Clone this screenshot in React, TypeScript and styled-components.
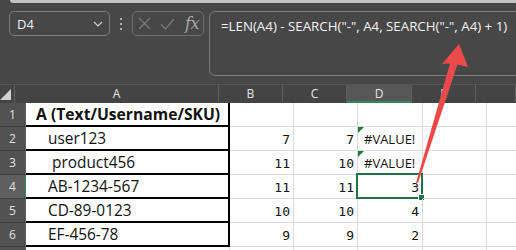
import React from 'react';
import styled, { createGlobalStyle } from 'styled-components';

const Global = createGlobalStyle`
  html, body { margin: 0; padding: 0; background: #ffffff; }
  body { width: 516px; height: 250px; overflow: hidden; font-family: "Open Sans", "Noto Sans", sans-serif; }
`;

const Page = styled.div`
  position: relative;
  width: 516px;
  height: 250px;
  overflow: hidden;
  background: #474747;
  display: flex;
  flex-direction: column;
`;

const TopStrip = styled.div`
  flex: none;
  height: 3px;
  margin-left: 10px;
  background: #c2c2c2;
  border-bottom-left-radius: 4px;
`;

const FormulaBar = styled.div`
  flex: none;
  height: 81px;
  box-sizing: border-box;
  padding: 8px 0 0 9px;
  display: flex;
  align-items: flex-start;
`;

const NameBox = styled.div`
  box-sizing: border-box;
  width: 101px;
  height: 25px;
  border: 1px solid #7c7c7c;
  border-radius: 5px;
  padding: 0 6px 0 7px;
  display: flex;
  align-items: center;
  justify-content: space-between;
  color: #f2f2f2;
  font-size: 13px;
`;

const Dots = styled.div`
  width: 22px;
  height: 25px;
  display: flex;
  flex-direction: column;
  align-items: center;
  justify-content: center;
  gap: 3px;
`;

const Dot = styled.span`
  width: 2px;
  height: 2px;
  border-radius: 1px;
  background: #cfcfcf;
`;

const ButtonBox = styled.div`
  box-sizing: border-box;
  width: 72px;
  height: 25px;
  border: 1px solid #6e6e6e;
  border-radius: 5px;
  display: flex;
  align-items: center;
  padding: 0 3px 0 5px;
  gap: 9px;
  margin-right: 5px;
`;

const Fx = styled.span`
  font-family: "DejaVu Serif", "Liberation Serif", serif;
  font-style: italic;
  font-size: 16px;
  color: #a9a9a9;
  letter-spacing: -0.5px;
  margin-left: 1px;
  line-height: 1;
`;

const FormulaBox = styled.div`
  box-sizing: border-box;
  flex: 1;
  height: 65px;
  margin-right: -20px;
  border: 1px solid #7c7c7c;
  border-radius: 6px;
  padding: 5px 0 0 11px;
  color: #f4f4f4;
  font-size: 13.3px;
  white-space: nowrap;
`;

const Sheet = styled.div`
  flex: 1;
  display: flex;
  flex-direction: column;
  background: #ffffff;
`;

const Row = styled.div<{ $h: number }>`
  display: flex;
  height: ${(p) => p.$h}px;
  flex: none;
`;

const Corner = styled.div`
  position: relative;
  box-sizing: border-box;
  width: 26px;
  background: #444444;
  border-right: 1px solid #5f5f5f;
  border-top: 1px solid #555;
  &::after {
    content: '';
    position: absolute;
    right: 3px;
    bottom: 3px;
    width: 0;
    height: 0;
    border-left: 11px solid transparent;
    border-bottom: 11px solid #d0d0d0;
  }
`;

const ColHead = styled.div<{ $w: number; $active?: boolean }>`
  box-sizing: border-box;
  width: ${(p) => p.$w}px;
  flex: none;
  display: flex;
  align-items: center;
  justify-content: center;
  background: ${(p) => (p.$active ? '#575757' : '#444444')};
  border-top: 1px solid #555;
  border-right: 1px solid #5f5f5f;
  border-bottom: 2px solid ${(p) => (p.$active ? '#2e8b57' : '#444444')};
  color: #e6e6e6;
  font-size: 12px;
  padding-top: 1px;
`;

const RowHead = styled.div<{ $active?: boolean }>`
  box-sizing: border-box;
  width: 26px;
  flex: none;
  display: flex;
  align-items: center;
  justify-content: center;
  background: ${(p) => (p.$active ? '#5f5f5f' : '#525252')};
  border-bottom: 1px solid #3f3f3f;
  border-right: 1px solid ${(p) => (p.$active ? '#2e8b57' : '#5f5f5f')};
  color: #e2e2e2;
  font-size: 12px;
`;

const Cell = styled.div<{ $w: number; $align?: 'left' | 'right'; $mono?: boolean }>`
  position: relative;
  box-sizing: border-box;
  width: ${(p) => p.$w}px;
  flex: none;
  display: flex;
  align-items: center;
  justify-content: ${(p) => (p.$align === 'right' ? 'flex-end' : 'flex-start')};
  padding: ${(p) => (p.$align === 'right' ? '2px 3px 0 0' : '0 0 0 6px')};
  border-right: 1px solid #dadada;
  border-bottom: 1px solid #dadada;
  color: #111;
  font-family: ${(p) => (p.$mono ? '"DejaVu Sans Mono", "Liberation Mono", monospace' : '"Open Sans", sans-serif')};
  font-size: 13px;
`;

const TextCell = styled.div<{ $bold?: boolean }>`
  box-sizing: border-box;
  width: 204px;
  flex: none;
  display: flex;
  align-items: center;
  padding-left: ${(p) => (p.$bold ? '10px' : '22px')};
  border-right: 2px solid #000;
  border-bottom: 2px solid #000;
  background: #fff;
  color: #111;
  font-size: ${(p) => (p.$bold ? '15.7px' : '15.4px')};
  font-weight: ${(p) => (p.$bold ? 700 : 400)};
  white-space: pre;
`;

const ErrorFlag = styled.span`
  position: absolute;
  left: 0;
  top: 0;
  width: 0;
  height: 0;
  border-top: 6px solid #1f7a3a;
  border-right: 6px solid transparent;
`;

const Selection = styled.span`
  position: absolute;
  left: -2px;
  top: -2px;
  right: -1px;
  bottom: -1px;
  border: 2px solid #217346;
  pointer-events: none;
  &::after {
    content: '';
    position: absolute;
    right: -4px;
    bottom: -4px;
    width: 5px;
    height: 5px;
    background: #217346;
    border: 1px solid #fff;
  }
`;

const Overlay = styled.svg`
  position: absolute;
  left: 0;
  top: 0;
  pointer-events: none;
`;

type RowData = {
  n: number;
  a: string;
  b?: string;
  c?: string;
  d?: string;
  err?: boolean;
  sel?: boolean;
  bold?: boolean;
};

const rows: RowData[] = [
  { n: 1, a: 'A (Text/Username/SKU)', bold: true },
  { n: 2, a: 'user123', b: '7', c: '7', d: '#VALUE!', err: true },
  { n: 3, a: ' product456', b: '11', c: '10', d: '#VALUE!', err: true },
  { n: 4, a: 'AB-1234-567', b: '11', c: '11', d: '3', sel: true },
  { n: 5, a: 'CD-89-0123', b: '10', c: '10', d: '4' },
  { n: 6, a: 'EF-456-78', b: '9', c: '9', d: '2' },
];

const cols = [
  { k: 'A', w: 204 },
  { k: 'B', w: 64 },
  { k: 'C', w: 64 },
  { k: 'D', w: 65 },
  { k: 'E', w: 64 },
  { k: '', w: 40 },
];

export default function App() {
  return (
    <Page>
      <Global />
      <TopStrip />
      <FormulaBar>
        <NameBox>
          <span>D4</span>
          <svg width="10" height="6" viewBox="0 0 10 6">
            <path d="M1 1 L5 5 L9 1" fill="none" stroke="#cfcfcf" strokeWidth="1.2" />
          </svg>
        </NameBox>
        <Dots>
          <Dot />
          <Dot />
          <Dot />
        </Dots>
        <ButtonBox>
          <svg width="13" height="13" viewBox="0 0 13 13">
            <path d="M1 1 L12 12 M12 1 L1 12" stroke="#7a7a7a" strokeWidth="1.2" />
          </svg>
          <svg width="15" height="12" viewBox="0 0 15 12">
            <path d="M1 6.5 L5.5 11 L14 1" fill="none" stroke="#7a7a7a" strokeWidth="1.2" />
          </svg>
          <Fx>fx</Fx>
        </ButtonBox>
        <FormulaBox>=LEN(A4) - SEARCH("-", A4, SEARCH("-", A4) + 1)</FormulaBox>
      </FormulaBar>
      <Sheet>
        <Row $h={19}>
          <Corner />
          {cols.map((c) => (
            <ColHead key={c.k || 'F'} $w={c.w} $active={c.k === 'D'}>
              {c.k}
            </ColHead>
          ))}
        </Row>
        {rows.map((r) => (
          <Row $h={24} key={r.n}>
            <RowHead $active={r.sel}>{r.n}</RowHead>
            <TextCell $bold={r.bold}>{r.a}</TextCell>
            <Cell $w={64} $align="right" $mono>{r.b}</Cell>
            <Cell $w={64} $align="right" $mono>{r.c}</Cell>
            {r.err ? (
              <Cell $w={65}>
                <ErrorFlag />
                {r.d}
              </Cell>
            ) : (
              <Cell $w={65} $align="right" $mono>
                {r.d}
                {r.sel && <Selection />}
              </Cell>
            )}
            <Cell $w={64} />
            <Cell $w={40} />
          </Row>
        ))}
        <Row $h={24}>
          <RowHead />
          <Cell $w={204} />
          <Cell $w={64} />
          <Cell $w={64} />
          <Cell $w={65} />
          <Cell $w={64} />
          <Cell $w={40} />
        </Row>
      </Sheet>
      <Overlay width="516" height="250" viewBox="0 0 516 250">
        <polygon
          points="459,44 468,67 457.5,64.5 418,183 416,183 450,63.5 442,64"
          fill="#ec4a4a"
        />
      </Overlay>
    </Page>
  );
}
